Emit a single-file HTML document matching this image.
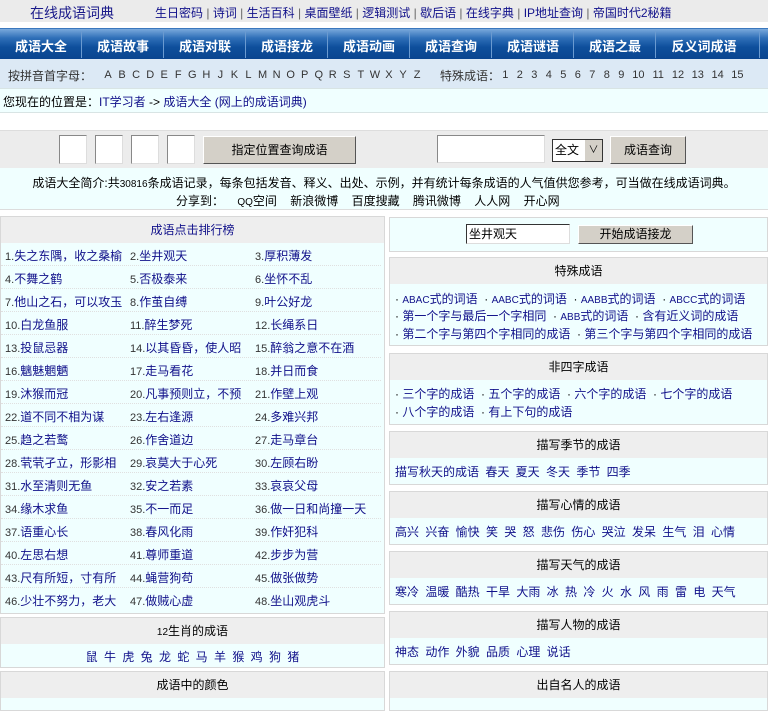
<!DOCTYPE html>
<html><head><meta charset="utf-8">
<style>
*{margin:0;padding:0;box-sizing:border-box}
body{width:768px;height:698px;overflow:hidden;background:#fff;font-family:"Liberation Sans","Noto Sans CJK SC",sans-serif;font-size:12px;color:#000;position:relative}
.a{position:absolute}
a{color:#10108a;text-decoration:none}
.top{left:0;top:0;width:768px;height:22px;background:#ebebeb}
.nav{left:0;top:28px;width:768px;height:31px;background:linear-gradient(#7aa9dc 0%,#2f6fb8 30%,#0e4f9c 60%,#0a4590 100%);border-top:1px solid #3b78be}
.nav span{position:absolute;top:7px;width:82px;text-align:center;color:#fff;font-weight:bold;font-size:13px}
.nav i{position:absolute;top:2px;width:1px;height:27px;background:#3a6fae;border-right:1px solid #6a9ad0}
.box{position:absolute;border:1px solid #d8d8d8;background:#f0ffff}
.hd{height:26px;background:#eeeeee;text-align:center;line-height:26px;font-size:12px}
.row{position:absolute;left:0;width:380px;height:23px;border-bottom:1px dotted #e0e0e0}
.row span{position:absolute;top:4px;white-space:nowrap;overflow:hidden;width:124px}
.row b{font-weight:normal;color:#333;font-size:11px}
.ln{position:absolute;left:5px;white-space:nowrap}
.inp{position:absolute;background:#fff;border:1px solid #888;border-right-color:#ddd;border-bottom-color:#ddd}
.btn{position:absolute;background:#d4d0c8;border:1px solid #fff;border-right-color:#555;border-bottom-color:#555;text-align:center;font-size:12px}
.lt{position:absolute;top:69px;left:101px;font-size:11px;color:#333;white-space:nowrap}
.lt s{text-decoration:none;display:inline-block;width:14.05px;text-align:center}
.nm{position:absolute;top:69px;left:498px;font-size:11px;color:#333;white-space:nowrap}
.nm s{text-decoration:none;display:inline-block;width:14.5px;text-align:center}
.nm u{text-decoration:none;display:inline-block;width:19.8px;text-align:center}
</style></head><body>
<div class="a top"></div>
<div class="a" style="left:30px;top:3px;font-size:14px;color:#1a1a8a">在线成语词典</div>
<div class="a" style="left:155px;top:4px;font-size:12px;color:#666;white-space:nowrap"><a>生日密码</a> | <a>诗词</a> | <a>生活百科</a> | <a>桌面壁纸</a> | <a>逻辑测试</a> | <a>歇后语</a> | <a>在线字典</a> | <a>IP地址查询</a> | <a>帝国时代2秘籍</a></div>
<div class="a nav">
<span style="left:0">成语大全</span><i style="left:81px"></i>
<span style="left:82px">成语故事</span><i style="left:163px"></i>
<span style="left:164px">成语对联</span><i style="left:245px"></i>
<span style="left:246px">成语接龙</span><i style="left:327px"></i>
<span style="left:328px">成语动画</span><i style="left:409px"></i>
<span style="left:410px">成语查询</span><i style="left:491px"></i>
<span style="left:492px">成语谜语</span><i style="left:573px"></i>
<span style="left:574px">成语之最</span><i style="left:655px"></i>
<span style="left:656px;width:96px">反义词成语</span><i style="left:759px"></i>
</div>
<div class="a" style="left:0;top:59px;width:768px;height:29px;background:#dce9f5"></div>
<div class="a" style="left:8px;top:67px;color:#333;white-space:nowrap;font-size:12px">按拼音首字母：</div>
<div class="lt"><s>A</s><s>B</s><s>C</s><s>D</s><s>E</s><s>F</s><s>G</s><s>H</s><s>J</s><s>K</s><s>L</s><s>M</s><s>N</s><s>O</s><s>P</s><s>Q</s><s>R</s><s>S</s><s>T</s><s>W</s><s>X</s><s>Y</s><s>Z</s></div>
<div class="a" style="left:440px;top:67px;color:#333;white-space:nowrap;font-size:12px">特殊成语：</div>
<div class="nm"><s>1</s><s>2</s><s>3</s><s>4</s><s>5</s><s>6</s><s>7</s><s>8</s><s>9</s><u>10</u><u>11</u><u>12</u><u>13</u><u>14</u><u>15</u></div>
<div class="a" style="left:0;top:88px;width:768px;height:25px;background:#f0ffff;border-top:1px solid #d8e4e4;border-bottom:1px solid #d8e4e4"></div>
<div class="a" style="left:3px;top:93px;white-space:nowrap">您现在的位置是：<a>IT学习者</a> -&gt; <a>成语大全</a> <a>(网上的成语词典)</a></div>
<div class="a" style="left:0;top:130px;width:768px;height:80px;background:#ececec;border-top:1px solid #ddd"></div>
<div class="inp" style="left:59px;top:135px;width:28px;height:29px"></div>
<div class="inp" style="left:95px;top:135px;width:28px;height:29px"></div>
<div class="inp" style="left:131px;top:135px;width:28px;height:29px"></div>
<div class="inp" style="left:167px;top:135px;width:28px;height:29px"></div>
<div class="btn" style="left:203px;top:136px;width:153px;height:28px;line-height:26px">指定位置查询成语</div>
<div class="inp" style="left:437px;top:135px;width:108px;height:28px"></div>
<div class="inp" style="left:552px;top:139px;width:51px;height:23px;border:1px solid #333;line-height:21px;padding-left:2px">全文<span style="position:absolute;right:0;top:0;width:17px;height:21px;background:#d4d0c8;text-align:center;font-size:10px">∨</span></div>
<div class="btn" style="left:610px;top:136px;width:76px;height:28px;line-height:26px">成语查询</div>
<div class="a" style="left:0;top:168px;width:768px;height:42px;background:#f0ffff;border-bottom:1px solid #ddd"></div>
<div class="a" style="left:0;top:174px;width:768px;text-align:center;white-space:nowrap">成语大全简介:共<span style="font-size:10px">30816</span>条成语记录，每条包括发音、释义、出处、示例，并有统计每条成语的人气值供您参考，可当做在线成语词典。</div>
<div class="a" style="left:176px;top:192px;white-space:nowrap;word-spacing:10px">分享到： <span style="font-size:10px">QQ</span>空间 新浪微博 百度搜藏 腾讯微博 人人网 开心网</div>

<div class="box" style="left:0;top:216px;width:385px;height:398px">
<div class="hd" style="color:#10108a">成语点击排行榜</div>
<div style="position:relative">
<div class="row" style="top:0"><span style="left:4px"><b>1.</b><a>失之东隅，收之桑榆</a></span><span style="left:129px"><b>2.</b><a>坐井观天</a></span><span style="left:254px"><b>3.</b><a>厚积薄发</a></span></div>
<div class="row" style="top:23px"><span style="left:4px"><b>4.</b><a>不舞之鹤</a></span><span style="left:129px"><b>5.</b><a>否极泰来</a></span><span style="left:254px"><b>6.</b><a>坐怀不乱</a></span></div>
<div class="row" style="top:46px"><span style="left:4px"><b>7.</b><a>他山之石，可以攻玉</a></span><span style="left:129px"><b>8.</b><a>作茧自缚</a></span><span style="left:254px"><b>9.</b><a>叶公好龙</a></span></div>
<div class="row" style="top:69px"><span style="left:4px"><b>10.</b><a>白龙鱼服</a></span><span style="left:129px"><b>11.</b><a>醉生梦死</a></span><span style="left:254px"><b>12.</b><a>长绳系日</a></span></div>
<div class="row" style="top:92px"><span style="left:4px"><b>13.</b><a>投鼠忌器</a></span><span style="left:129px"><b>14.</b><a>以其昏昏，使人昭</a></span><span style="left:254px"><b>15.</b><a>醉翁之意不在酒</a></span></div>
<div class="row" style="top:115px"><span style="left:4px"><b>16.</b><a>魑魅魍魉</a></span><span style="left:129px"><b>17.</b><a>走马看花</a></span><span style="left:254px"><b>18.</b><a>并日而食</a></span></div>
<div class="row" style="top:138px"><span style="left:4px"><b>19.</b><a>沐猴而冠</a></span><span style="left:129px"><b>20.</b><a>凡事预则立，不预</a></span><span style="left:254px"><b>21.</b><a>作壁上观</a></span></div>
<div class="row" style="top:161px"><span style="left:4px"><b>22.</b><a>道不同不相为谋</a></span><span style="left:129px"><b>23.</b><a>左右逢源</a></span><span style="left:254px"><b>24.</b><a>多难兴邦</a></span></div>
<div class="row" style="top:184px"><span style="left:4px"><b>25.</b><a>趋之若鹜</a></span><span style="left:129px"><b>26.</b><a>作舍道边</a></span><span style="left:254px"><b>27.</b><a>走马章台</a></span></div>
<div class="row" style="top:207px"><span style="left:4px"><b>28.</b><a>茕茕孑立，形影相</a></span><span style="left:129px"><b>29.</b><a>哀莫大于心死</a></span><span style="left:254px"><b>30.</b><a>左顾右盼</a></span></div>
<div class="row" style="top:230px"><span style="left:4px"><b>31.</b><a>水至清则无鱼</a></span><span style="left:129px"><b>32.</b><a>安之若素</a></span><span style="left:254px"><b>33.</b><a>哀哀父母</a></span></div>
<div class="row" style="top:253px"><span style="left:4px"><b>34.</b><a>缘木求鱼</a></span><span style="left:129px"><b>35.</b><a>不一而足</a></span><span style="left:254px"><b>36.</b><a>做一日和尚撞一天</a></span></div>
<div class="row" style="top:276px"><span style="left:4px"><b>37.</b><a>语重心长</a></span><span style="left:129px"><b>38.</b><a>春风化雨</a></span><span style="left:254px"><b>39.</b><a>作奸犯科</a></span></div>
<div class="row" style="top:299px"><span style="left:4px"><b>40.</b><a>左思右想</a></span><span style="left:129px"><b>41.</b><a>尊师重道</a></span><span style="left:254px"><b>42.</b><a>步步为营</a></span></div>
<div class="row" style="top:322px"><span style="left:4px"><b>43.</b><a>尺有所短，寸有所</a></span><span style="left:129px"><b>44.</b><a>蝇营狗苟</a></span><span style="left:254px"><b>45.</b><a>做张做势</a></span></div>
<div class="row" style="top:345px;border:none"><span style="left:4px"><b>46.</b><a>少壮不努力，老大</a></span><span style="left:129px"><b>47.</b><a>做贼心虚</a></span><span style="left:254px"><b>48.</b><a>坐山观虎斗</a></span></div>
</div></div>

<div class="box" style="left:0;top:617px;width:385px;height:51px">
<div class="hd"><span style="font-size:10px">12</span>生肖的成语</div>
<div style="text-align:center;padding-top:4px;word-spacing:3px"><a>鼠 牛 虎 兔 龙 蛇 马 羊 猴 鸡 狗 猪</a></div></div>
<div class="box" style="left:0;top:671px;width:385px;height:40px"><div class="hd">成语中的颜色</div></div>

<div class="box" style="left:389px;top:217px;width:379px;height:35px">
<div class="inp" style="left:76px;top:6px;width:104px;height:20px;padding-left:2px;line-height:18px;border-color:#333 #ddd #ddd #333">坐井观天</div>
<div class="btn" style="left:188px;top:7px;width:115px;height:19px;line-height:17px">开始成语接龙</div></div>

<div class="box" style="left:389px;top:257px;width:379px;height:89px">
<div class="hd">特殊成语</div>
<div class="ln" style="top:32px">· <a><span style="font-size:10px">ABAC</span>式的词语</a> &nbsp;· <a><span style="font-size:10px">AABC</span>式的词语</a> &nbsp;· <a><span style="font-size:10px">AABB</span>式的词语</a> &nbsp;· <a><span style="font-size:10px">ABCC</span>式的词语</a></div>
<div class="ln" style="top:49px">· <a>第一个字与最后一个字相同</a> &nbsp;· <a><span style="font-size:10px">ABB</span>式的词语</a> &nbsp;· <a>含有近义词的成语</a></div>
<div class="ln" style="top:67px">· <a>第二个字与第四个字相同的成语</a> &nbsp;· <a>第三个字与第四个字相同的成语</a></div></div>

<div class="box" style="left:389px;top:353px;width:379px;height:72px">
<div class="hd">非四字成语</div>
<div class="ln" style="top:31px">· <a>三个字的成语</a> &nbsp;· <a>五个字的成语</a> &nbsp;· <a>六个字的成语</a> &nbsp;· <a>七个字的成语</a></div>
<div class="ln" style="top:49px">· <a>八个字的成语</a> &nbsp;· <a>有上下句的成语</a></div></div>

<div class="box" style="left:389px;top:431px;width:379px;height:54px">
<div class="hd">描写季节的成语</div>
<div class="ln" style="top:31px;word-spacing:3px"><a>描写秋天的成语 春天 夏天 冬天 季节 四季</a></div></div>
<div class="box" style="left:389px;top:491px;width:379px;height:54px">
<div class="hd">描写心情的成语</div>
<div class="ln" style="top:31px;word-spacing:3px"><a>高兴 兴奋 愉快 笑 哭 怒 悲伤 伤心 哭泣 发呆 生气 泪 心情</a></div></div>
<div class="box" style="left:389px;top:551px;width:379px;height:54px">
<div class="hd">描写天气的成语</div>
<div class="ln" style="top:31px;word-spacing:3px"><a>寒冷 温暖 酷热 干旱 大雨 冰 热 冷 火 水 风 雨 雷 电 天气</a></div></div>
<div class="box" style="left:389px;top:611px;width:379px;height:54px">
<div class="hd">描写人物的成语</div>
<div class="ln" style="top:31px;word-spacing:3px"><a>神态 动作 外貌 品质 心理 说话</a></div></div>
<div class="box" style="left:389px;top:671px;width:379px;height:40px"><div class="hd">出自名人的成语</div></div>
</body></html>
